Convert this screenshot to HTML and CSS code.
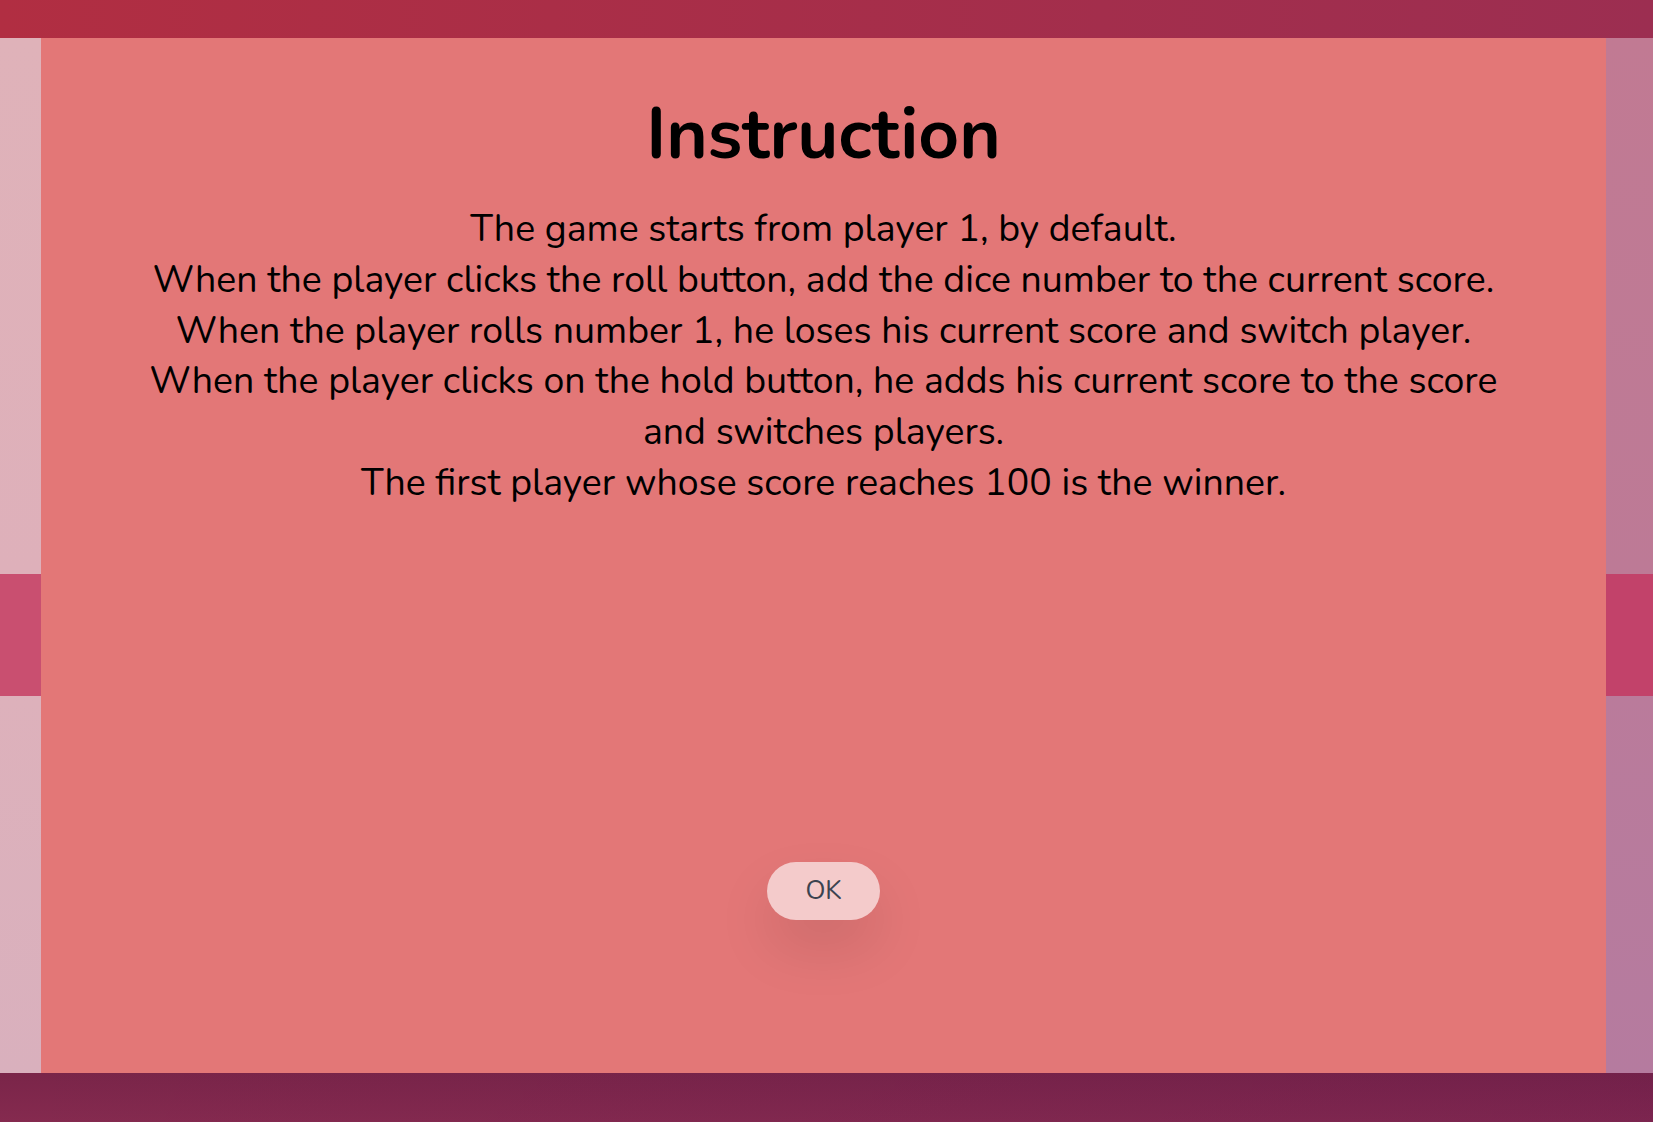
FILE: index.html
```html
<!DOCTYPE html>
<html lang="en">
<head>
<meta charset="utf-8">
<title>Pig Game - Instruction</title>
<link rel="stylesheet" href="styles.css">
</head>
<body>
  <div class="band band--top"></div>
  <div class="stage">
    <div class="side side--left">
      <div class="seg seg--upper"></div>
      <div class="seg seg--mid"></div>
      <div class="seg seg--lower"></div>
    </div>
    <section class="modal">
      <h2 class="modal__title">Instruction</h2>
      <p class="modal__text">The game starts from player 1, by default.<br>When the player clicks the roll button, add the dice number to the current score.<br>When the player rolls number 1, he loses his current score and switch player.<br>When the player clicks on the hold button, he adds his current score to the score and switches players.<br>The first player whose score reaches 100 is the winner.</p>
      <button class="btn">OK</button>
    </section>
    <div class="side side--right">
      <div class="seg seg--upper"></div>
      <div class="seg seg--mid"></div>
      <div class="seg seg--lower"></div>
    </div>
  </div>
  <div class="band band--bottom"></div>
</body>
</html>
```
FILE: styles.css
```css
* { box-sizing: border-box; }

html, body {
  margin: 0;
  padding: 0;
  height: 100%;
}

body {
  font-family: "Nunito", "Lato", "Open Sans", sans-serif;
  display: flex;
  flex-direction: column;
  overflow: hidden;
  background: #8d2a4f;
}

.band--top {
  height: 38px;
  flex: none;
  background: linear-gradient(to right, #b12e42, #9c2e51);
}

.band--bottom {
  flex: 1;
  background: linear-gradient(to bottom, #7a2549 0%, #852a4f 100%);
  position: relative;
}
.band--bottom::after {
  content: "";
  position: absolute;
  inset: 0;
  background: linear-gradient(to right, rgba(0,0,0,0) 0%, rgba(60,0,80,0.12) 100%);
}

.stage {
  display: flex;
  height: 1035px;
  flex: none;
}

.side {
  width: 41px;
  flex: none;
  display: flex;
  flex-direction: column;
}
.side--right { width: 47px; }

.seg--upper { height: 536px; }
.seg--mid { height: 122px; }
.seg--lower { flex: 1; }

.side--left .seg--upper { background: linear-gradient(#dfb2b9, #deb0ba); }
.side--left .seg--mid { background: #c94f70; }
.side--left .seg--lower { background: linear-gradient(#ddb1bb, #d9b0bd); }

.side--right .seg--upper { background: linear-gradient(#c17a93, #bd7a96); }
.side--right .seg--mid { background: #c2426a; }
.side--right .seg--lower { background: linear-gradient(#ba7b9b, #b57b9f); }

.modal {
  flex: 1;
  background: #e37777;
  display: flex;
  flex-direction: column;
  align-items: center;
  text-align: center;
  color: #000;
}

.modal__title {
  margin: 54px 0 0;
  font-size: 71px;
  font-weight: 700;
  line-height: 1.2;
}

.modal__text {
  margin: 27px 0 0;
  max-width: 1370px;
  font-size: 37.5px;
  line-height: 50.75px;
  font-weight: 400;
}

.btn {
  margin-top: 353px;
  width: 113px;
  height: 58px;
  border: none;
  border-radius: 50px;
  background: #f4cbcb;
  color: #3b4350;
  font-family: inherit;
  font-size: 26px;
  box-shadow: 0 28px 56px rgba(0, 0, 0, 0.1);
  cursor: pointer;
}
```
